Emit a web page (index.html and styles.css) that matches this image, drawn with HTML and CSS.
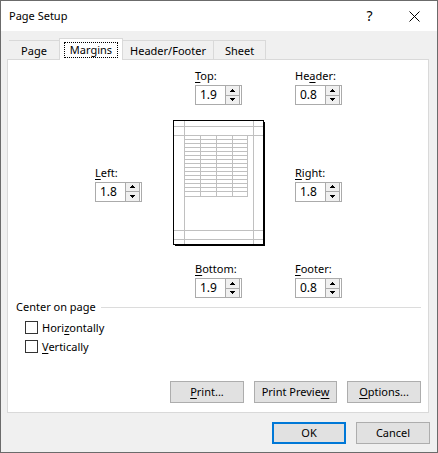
FILE: index.html
```html
<!DOCTYPE html>
<html lang="en">
<head>
<meta charset="utf-8">
<title>Page Setup</title>
<link rel="stylesheet" href="styles.css">
</head>
<body>
<form class="dialog">
  <header class="titlebar">
    <h1 class="title">Page Setup</h1>
    <button class="caption help" type="button" aria-label="Help">?</button>
    <button class="caption" type="button" aria-label="Close">
      <svg width="11" height="11" viewBox="0 0 11 11"><path d="M.5.5l10 10M10.500.5l-10 10" fill="none" stroke="#000"/></svg>
    </button>
  </header>

  <nav class="tabs" role="tablist">
    <button class="tab tab-page" type="button" role="tab">Page</button>
    <button class="tab tab-margins active" type="button" role="tab" aria-selected="true"><span class="focus">Margins</span></button>
    <button class="tab tab-header" type="button" role="tab">Header/Footer</button>
    <button class="tab tab-sheet" type="button" role="tab">Sheet</button>
  </nav>

  <main class="panel">
    <div class="margins">
      <div class="field top">
        <label for="top"><u>T</u>op:</label>
        <div class="spin"><input id="top" type="text" value="1.9"><span class="steps"><button type="button" class="step" aria-label="Increase"><svg width="5" height="3" viewBox="0 0 5 3"><path d="M2 0h1v1h1v1h1v1H0V2h1V1h1z"/></svg></button><button type="button" class="step" aria-label="Decrease"><svg width="5" height="3" viewBox="0 0 5 3"><path d="M0 0h5v1H4v1H3v1H2V2H1V1H0z"/></svg></button></span></div>
      </div>
      <div class="field header">
        <label for="header">He<u>a</u>der:</label>
        <div class="spin"><input id="header" type="text" value="0.8"><span class="steps"><button type="button" class="step" aria-label="Increase"><svg width="5" height="3" viewBox="0 0 5 3"><path d="M2 0h1v1h1v1h1v1H0V2h1V1h1z"/></svg></button><button type="button" class="step" aria-label="Decrease"><svg width="5" height="3" viewBox="0 0 5 3"><path d="M0 0h5v1H4v1H3v1H2V2H1V1H0z"/></svg></button></span></div>
      </div>
      <div class="field left">
        <label for="left"><u>L</u>eft:</label>
        <div class="spin"><input id="left" type="text" value="1.8"><span class="steps"><button type="button" class="step" aria-label="Increase"><svg width="5" height="3" viewBox="0 0 5 3"><path d="M2 0h1v1h1v1h1v1H0V2h1V1h1z"/></svg></button><button type="button" class="step" aria-label="Decrease"><svg width="5" height="3" viewBox="0 0 5 3"><path d="M0 0h5v1H4v1H3v1H2V2H1V1H0z"/></svg></button></span></div>
      </div>
      <svg class="preview" width="92" height="126" viewBox="0 0 92 126" shape-rendering="crispEdges">
        <path d="M2 2h90v124H2z"/>
        <path d="M0 0h91v125H0z"/>
        <path d="M1 1h89v123H1z" fill="#fff"/>
        <g fill="none" stroke="#c0c0c0">
          <path d="M11.500 1v123M80.500 1v123M1 6.500h89M1 15.500h89M1 110.500h89M1 119.500h89"/>
          <path d="M27.500 15v61M43.500 15v61M59.500 15v61M74.500 15v62"/>
          <path d="M11 19.500h63M11 23.500h63M11 27.500h63M11 31.500h63M11 35.500h63M11 39.500h63M11 43.500h63M11 47.500h63M11 51.500h63M11 55.500h63M11 59.500h63M11 63.500h63M11 67.500h63M11 71.500h63M11 76.500h63"/>
        </g>
      </svg>
      <div class="field right">
        <label for="right"><u>R</u>ight:</label>
        <div class="spin"><input id="right" type="text" value="1.8"><span class="steps"><button type="button" class="step" aria-label="Increase"><svg width="5" height="3" viewBox="0 0 5 3"><path d="M2 0h1v1h1v1h1v1H0V2h1V1h1z"/></svg></button><button type="button" class="step" aria-label="Decrease"><svg width="5" height="3" viewBox="0 0 5 3"><path d="M0 0h5v1H4v1H3v1H2V2H1V1H0z"/></svg></button></span></div>
      </div>
      <div class="field bottom">
        <label for="bottom"><u>B</u>ottom:</label>
        <div class="spin"><input id="bottom" type="text" value="1.9"><span class="steps"><button type="button" class="step" aria-label="Increase"><svg width="5" height="3" viewBox="0 0 5 3"><path d="M2 0h1v1h1v1h1v1H0V2h1V1h1z"/></svg></button><button type="button" class="step" aria-label="Decrease"><svg width="5" height="3" viewBox="0 0 5 3"><path d="M0 0h5v1H4v1H3v1H2V2H1V1H0z"/></svg></button></span></div>
      </div>
      <div class="field footer">
        <label for="footer"><u>F</u>ooter:</label>
        <div class="spin"><input id="footer" type="text" value="0.8"><span class="steps"><button type="button" class="step" aria-label="Increase"><svg width="5" height="3" viewBox="0 0 5 3"><path d="M2 0h1v1h1v1h1v1H0V2h1V1h1z"/></svg></button><button type="button" class="step" aria-label="Decrease"><svg width="5" height="3" viewBox="0 0 5 3"><path d="M0 0h5v1H4v1H3v1H2V2H1V1H0z"/></svg></button></span></div>
      </div>
    </div>

    <section class="center" role="group" aria-labelledby="center-title">
      <h2 class="group-title" id="center-title">Center on page</h2>
      <label class="check"><input type="checkbox"><span>Hori<u>z</u>ontally</span></label>
      <label class="check"><input type="checkbox"><span><u>V</u>ertically</span></label>
    </section>

    <div class="actions">
      <button class="btn" type="button"><span><u>P</u>rint...</span></button>
      <button class="btn wide" type="button"><span>Print Previe<u>w</u></span></button>
      <button class="btn" type="button"><span><u>O</u>ptions...</span></button>
    </div>
  </main>

  <footer class="commands">
    <button class="btn default" type="submit">OK</button>
    <button class="btn" type="button">Cancel</button>
  </footer>
</form>
</body>
</html>
```
FILE: styles.css
```css
* {
  box-sizing: border-box;
}

body {
  margin: 0;
  background: #6b6b6b;
  color: #000;
  font: 11px/16px "Noto Sans", "Open Sans", sans-serif;
}

button,
input {
  margin: 0;
  padding: 0;
  border: 0;
  border-radius: 0;
  background: none;
  color: inherit;
  font: inherit;
}

h1,
h2 {
  margin: 0;
  font: inherit;
}

u {
  text-underline-offset: 2px;
  text-decoration-thickness: 1px;
  text-decoration-skip-ink: none;
}

.dialog {
  display: flex;
  flex-direction: column;
  min-height: 100vh;
  border: 1px solid #6b6b6b;
  background: #f0f0f0;
}

.titlebar {
  display: flex;
  align-items: center;
  height: 30px;
  padding-left: 8px;
  background: #fff;
}

.title {
  flex: 1;
}

.caption {
  display: grid;
  place-items: center;
  width: 45px;
  height: 30px;
}

.help {
  font-size: 14px;
}

.tabs {
  display: flex;
  align-items: flex-end;
  margin: 7px 8px 0;
}

.tab {
  height: 19px;
  padding-top: 2px;
  border: 1px solid #d9d9d9;
  border-width: 1px 1px 0 0;
}

.tab-page {
  width: 50px;
  border-right: 0;
}

.tab-margins {
  width: 64px;
}

.tab-header {
  width: 91px;
}

.tab-sheet {
  width: 52px;
}

.tab.active {
  z-index: 1;
  height: 22px;
  margin-bottom: -1px;
  border-left-width: 1px;
  background: #fff;
}

.focus {
  display: block;
  margin: 0 4px 1px;
  border: 1px dotted #000;
  line-height: 14px;
}

.panel {
  display: flex;
  flex: 1;
  flex-direction: column;
  margin: 0 8px 0 6px;
  padding: 8px 7px 9px 8px;
  border: 1px solid #d9d9d9;
  background: #fff;
}

.margins {
  display: grid;
  grid-template-columns: repeat(3, 100px);
  grid-template-areas:
    ". top header"
    "left preview right"
    ". bottom footer";
  justify-content: center;
  place-items: center;
  row-gap: 15px;
}

.preview {
  grid-area: preview;
  display: block;
}

.top { grid-area: top; }
.header { grid-area: header; }
.left { grid-area: left; }
.right { grid-area: right; }
.bottom { grid-area: bottom; }
.footer { grid-area: footer; }

.field {
  width: 47px;
}

.field label {
  display: block;
  height: 17px;
  white-space: nowrap;
}

.spin {
  display: flex;
  height: 20px;
  padding-right: 1px;
  border: 1px solid #ababab;
  background: #fff;
}

.spin input {
  flex: 1;
  min-width: 0;
  padding-left: 4px;
  font-size: 12px;
}

.steps {
  display: flex;
  flex-direction: column;
  width: 15px;
}

.step {
  display: grid;
  flex: 1;
  place-items: center;
  border: 1px solid #ababab;
  border-width: 0 1px 0 1px;
  background: #f0f0f0;
}

.step + .step {
  border-top-width: 1px;
}

.step svg {
  display: block;
  shape-rendering: crispEdges;
}

.center {
  margin-top: 1px;
}

.group-title {
  display: flex;
  align-items: center;
  gap: 5px;
  margin-bottom: 3px;
}

.group-title::after {
  flex: 1;
  height: 1px;
  background: #dcdcdc;
  content: "";
}

.check {
  display: flex;
  align-items: center;
  gap: 4px;
  height: 19px;
  padding-left: 9px;
}

.check input {
  width: 13px;
  height: 13px;
  border: 1px solid #333;
  background: #fff;
  appearance: none;
}

.actions,
.commands {
  display: flex;
  justify-content: flex-end;
}

.actions {
  gap: 10px;
  margin-top: auto;
}

.commands {
  gap: 10px;
  padding: 9px 7px 8px;
}

.btn {
  width: 74px;
  height: 22px;
  border: 1px solid #adadad;
  background: #e1e1e1;
}

.wide {
  width: 83px;
}

.default {
  border: 2px solid #0078d7;
}
```
